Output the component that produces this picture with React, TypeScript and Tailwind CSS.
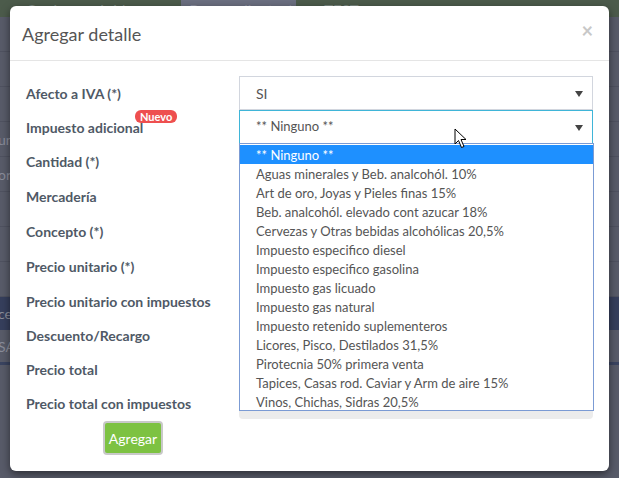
import React from "react";

const labels = [
  "Afecto a IVA (*)",
  "Impuesto adicional",
  "Cantidad (*)",
  "Mercadería",
  "Concepto (*)",
  "Precio unitario (*)",
  "Precio unitario con impuestos",
  "Descuento/Recargo",
  "Precio total",
  "Precio total con impuestos",
];
const heights = ["h-[34px]", "h-[34px]", "h-[35px]", "h-[35px]", "h-[35px]", "h-[35px]", "h-[34px]", "h-[34px]", "h-[34px]", "h-[34px]"];

const options = [
  "** Ninguno **",
  "Aguas minerales y Beb. analcohól. 10%",
  "Art de oro, Joyas y Pieles finas 15%",
  "Beb. analcohól. elevado cont azucar 18%",
  "Cervezas y Otras bebidas alcohólicas 20,5%",
  "Impuesto especifico diesel",
  "Impuesto especifico gasolina",
  "Impuesto gas licuado",
  "Impuesto gas natural",
  "Impuesto retenido suplementeros",
  "Licores, Pisco, Destilados 31,5%",
  "Pirotecnia 50% primera venta",
  "Tapices, Casas rod. Caviar y Arm de aire 15%",
  "Vinos, Chichas, Sidras 20,5%",
];

const Arrow = () => (
  <svg width="8" height="6" viewBox="0 0 8 6" className="absolute right-[9px] top-[14px]">
    <path d="M0 0 L8 0 L4 6 Z" fill="#444" />
  </svg>
);

export default function App() {
  const font = { fontFamily: "Lato, 'Noto Sans', sans-serif" };
  return (
    <div className="relative w-[619px] h-[478px] overflow-hidden bg-[#585b69]" style={font}>
      {/* background page */}
      <div className="h-[17px] bg-[#4c5b4b] flex items-end text-[#7d8a82] text-[15px] leading-none overflow-hidden">
        <span className="ml-[26px] -mb-[1px]">Opciones rápidas ▾</span>
        <div className="ml-[30px] w-[115px] h-[17px] bg-[#6b6f80] text-[#8a8ea0] flex items-end pl-[8px] overflow-hidden">
          <span className="-mb-[1px] whitespace-nowrap">Buscar cliente / prov</span>
        </div>
        <span className="ml-[28px] -mb-[1px]">TEST</span>
      </div>
      <div className="flex flex-col text-[#8a8d9a] text-[14px]">
        <div className="h-[35px] border-b border-[#4f5260]" />
        <div className="h-[35px] border-b border-[#4f5260]" />
        <div className="h-[35px] border-b border-[#4f5260]" />
        <div className="h-[35px] border-b border-[#4f5260] flex items-center"><span className="-ml-[2px]">un</span></div>
        <div className="h-[35px] border-b border-[#4f5260] flex items-center"><span className="-ml-[2px]">or</span></div>
        <div className="h-[35px] border-b border-[#4f5260]" />
        <div className="h-[35px] border-b border-[#4f5260]" />
        <div className="h-[35px] border-b border-[#4f5260]" />
        <div className="h-[33px] bg-[#363f5c] flex items-center"><span className="-ml-[2px]">ce</span></div>
        <div className="h-[35px] border-b-[3px] border-[#3a4460] flex items-center"><span className="-ml-[2px]">SA</span></div>
      </div>

      {/* modal */}
      <div className="absolute left-[10px] top-[6px] w-[599px] h-[465px] bg-white rounded-[6px] shadow-[0_3px_9px_rgba(0,0,0,0.5)] text-[#555]">
        <div className="h-[55px] border-b border-[#e5e5e5] flex items-center justify-between pl-[12px] pr-[16px]">
          <span className="text-[18px] text-[#555] pt-[2px]">Agregar detalle</span>
          <span className="text-[20px] text-[#c8c8c8] font-bold -mt-[6px]">×</span>
        </div>
        <div className="relative pt-[15px] px-[16px]">
          {labels.map((l, i) => (
            <div key={l} className={`flex ${heights[i]}`}>
              <div className="w-[213px] flex items-center font-bold text-[14px] text-[#4f5966] relative">
                {l}
                {i === 1 && (
                  <span className="absolute left-[109px] top-[0px] bg-[#ee4f4f] text-white text-[11px] font-bold leading-none px-[5px] py-[1px] rounded-[6px]">
                    Nuevo
                  </span>
                )}
              </div>
              <div className="w-[354px]">
                {i === 0 && (
                  <div className="relative h-[34px] border border-[#d2d6de] flex items-center pl-[16px] text-[14px] text-[#555]">
                    SI
                    <Arrow />
                  </div>
                )}
                {i === 1 && (
                  <div className="relative h-[34px] border border-[#3fb5d8] flex items-center pl-[16px] text-[13px] text-[#555]">
                    ** Ninguno **
                    <Arrow />
                  </div>
                )}
                {i > 1 && i < 9 && <div className="h-[34px] border border-[#d2d6de]" />}
                {i === 9 && <div className="h-[33px] bg-[#ececec] rounded-[4px]" />}
              </div>
            </div>
          ))}
          <div className="pl-[77px] pt-[1px]">
            <button className="w-[60px] h-[34px] bg-[#7dc242] text-white text-[14px] rounded-[4px] border-2 border-[#c9c9c9]">
              Agregar
            </button>
          </div>

          {/* open dropdown */}
          <div className="absolute left-[229px] top-[82px] w-[355px] h-[268px] bg-white border border-[#7b9bd4] pt-[1px] text-[13px] text-[#555]">
            {options.map((o, i) => (
              <div
                key={o}
                className={`h-[19px] leading-[20px] pl-[16px] ${i === 0 ? "bg-[#1e90ff] text-white" : ""}`}
              >
                {o}
              </div>
            ))}
          </div>
        </div>
      </div>

      {/* mouse cursor */}
      <svg className="absolute left-[454px] top-[128px]" width="16" height="22" viewBox="0 0 16 22">
        <path d="M1 1 L1 16 L4.5 12.5 L7.5 19.5 L10 18.5 L7 11.5 L12 11.5 Z" fill="white" stroke="black" strokeWidth="1" strokeLinejoin="round" />
      </svg>
    </div>
  );
}
